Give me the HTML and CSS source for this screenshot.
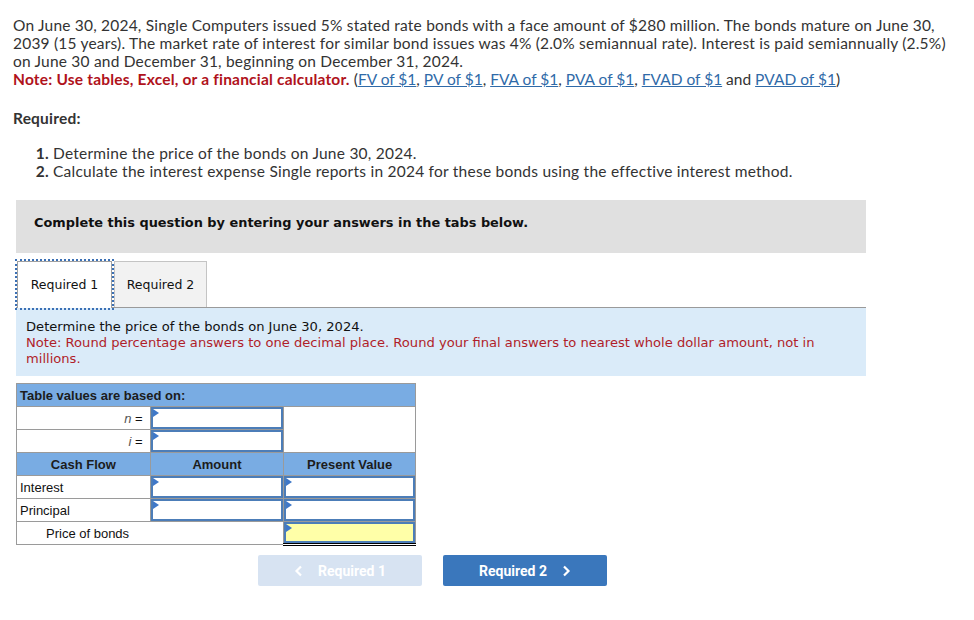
FILE: index.html
```html
<!DOCTYPE html>
<html>
<head>
<meta charset="utf-8">
<link rel="stylesheet" href="styles.css">
</head>
<body>
<div class="page">
  <p class="intro">On June 30, 2024, Single Computers issued 5% stated rate bonds with a face amount of $280 million. The bonds mature on June 30,<br>2039 (15 years). The market rate of interest for similar bond issues was 4% (2.0% semiannual rate). Interest is paid semiannually (2.5%)<br>on June 30 and December 31, beginning on December 31, 2024.<br><span class="note">Note: Use tables, Excel, or a financial calculator.</span> <span class="links">(<a href="#">FV of $1</a>, <a href="#">PV of $1</a>, <a href="#">FVA of $1</a>, <a href="#">PVA of $1</a>, <a href="#">FVAD of $1</a> and <a href="#">PVAD of $1</a>)</span></p>
  <p class="req-title">Required:</p>
  <div class="req-list">
    <span class="num">1.</span><span>Determine the price of the bonds on June 30, 2024.</span>
    <span class="num">2.</span><span>Calculate the interest expense Single reports in 2024 for these bonds using the effective interest method.</span>
  </div>
  <div class="work">
    <div class="band">Complete this question by entering your answers in the tabs below.</div>
    <div class="tabs">
      <div class="tab active">Required 1</div>
      <div class="tab">Required 2</div>
    </div>
    <div class="panel">
      <div>Determine the price of the bonds on June 30, 2024.</div>
      <div class="panel-note">Note: Round percentage answers to one decimal place. Round your final answers to nearest whole dollar amount, not in<br>millions.</div>
    </div>
    <table class="grid">
      <colgroup><col class="c1"><col class="c2"><col class="c3"></colgroup>
      <tr><th colspan="3" class="title">Table values are based on:</th></tr>
      <tr><td class="lbl-r"><i>n</i> =</td><td class="inp"><span class="flag"></span></td><td rowspan="2"></td></tr>
      <tr><td class="lbl-r"><i>i</i> =</td><td class="inp"><span class="flag"></span></td></tr>
      <tr><th>Cash Flow</th><th>Amount</th><th>Present Value</th></tr>
      <tr><td class="lbl">Interest</td><td class="inp"><span class="flag"></span></td><td class="inp"><span class="flag"></span></td></tr>
      <tr><td class="lbl">Principal</td><td class="inp"><span class="flag"></span></td><td class="inp"><span class="flag"></span></td></tr>
      <tr><td colspan="2" class="lbl total">Price of bonds</td><td class="inp yellow"><span class="flag"></span></td></tr>
    </table>
    <div class="nav">
      <div class="btn disabled"><svg width="9" height="12" viewBox="0 0 9 12"><path d="M7 1.5L2.5 6L7 10.5" fill="none" stroke="#fff" stroke-width="2.2"/></svg><span>Required 1</span></div>
      <div class="btn primary"><span>Required 2</span><svg width="9" height="12" viewBox="0 0 9 12"><path d="M2 1.5L6.5 6L2 10.5" fill="none" stroke="#fff" stroke-width="2.2"/></svg></div>
    </div>
  </div>
</div>
</body>
</html>
```
FILE: styles.css
```css
html, body { margin: 0; padding: 0; background: #fff; }
.page { padding: 16px 0 0 13px; font-family: Lato, "Liberation Sans", sans-serif; color: #333; }
.intro { margin: 0; font-size: 15.5px; letter-spacing: 0.2px; line-height: 18px; white-space: nowrap; }
.note { color: #b0121b; font-weight: bold; }
.links { letter-spacing: 0; }
.intro a { color: #2f6aa8; text-decoration: underline; }
.req-title { margin: 21px 0 0; font-size: 15.5px; letter-spacing: 0.2px; line-height: 18px; font-weight: bold; }
.req-list { margin: 17px 0 0; display: grid; grid-template-columns: 36px auto; column-gap: 4px; font-size: 15.5px; letter-spacing: 0.24px; line-height: 18px; }
.req-list .num { text-align: right; font-weight: bold; }
.work { margin: 20px 0 0 3px; width: 850px; font-family: "DejaVu Sans", Verdana, sans-serif; color: #222; }
.band { background: #e0e0e0; height: 53px; box-sizing: border-box; padding: 14px 0 0 18px; font-size: 12.9px; font-weight: bold; line-height: 17px; color: #111; }
.tabs { display: flex; margin-top: 8px; border-bottom: 1px solid #9a9a9a; height: 46px; }
.tab { box-sizing: border-box; height: 46px; padding: 14px 0 0; text-align: center; font-size: 12.5px; line-height: 17px; border: 1px solid #c4c4c4; border-bottom: none; background: #f2f2f2; width: 93px; color: #111; }
.tab.active { width: 95px; margin-left: 1px; margin-right: 2px; background: #fff; border-color: #a0a0a0; outline: 2px dotted #3b70b5; outline-offset: 0; height: 47px; }
.panel { background: #daebf9; padding: 11px 0 9px 10px; font-size: 13.1px; line-height: 16px; color: #111; }
.panel-note { color: #b01e2a; }
.grid { margin-top: 7px; border-collapse: collapse; width: 400px; font-family: "Liberation Sans", Arial, sans-serif; font-size: 13px; color: #111; }
.grid .c1, .grid .c2 { width: 134px; }
.grid .c3 { width: 132px; }
.grid td, .grid th { border: 1px solid #9a9a9a; height: 23px; box-sizing: border-box; padding: 0 3px; }
.grid th { background: #79ace3; font-weight: bold; text-align: center; color: #1c1c1c; }
.grid th.title { text-align: left; }
.grid td.lbl-r { text-align: right; padding-right: 7px; }
.grid td.lbl-r i { color: #555; }
.grid td.inp { position: relative; padding: 0; border: 1px solid #9a9a9a; box-shadow: inset 0 0 0 2px #4c7db8; }
.grid td.yellow { background: #ffffa8; border-bottom: 3px double #000; }
.grid td.total { padding-left: 29px; }
.flag { position: absolute; left: 2px; top: 2px; width: 0; height: 0; border-top: 4px solid transparent; border-bottom: 4px solid transparent; border-left: 6px solid #3f78c8; }
.nav { display: flex; gap: 21px; margin: 9px 0 0 242px; }
.btn { width: 164px; height: 31px; border-radius: 2px; display: flex; align-items: center; justify-content: center; gap: 15px; font-family: Roboto, "Liberation Sans", sans-serif; font-weight: bold; font-size: 14px; color: #fff; }
.btn.disabled { background: #d7e3f2; }
.btn.primary { background: #3a77bc; }
```
